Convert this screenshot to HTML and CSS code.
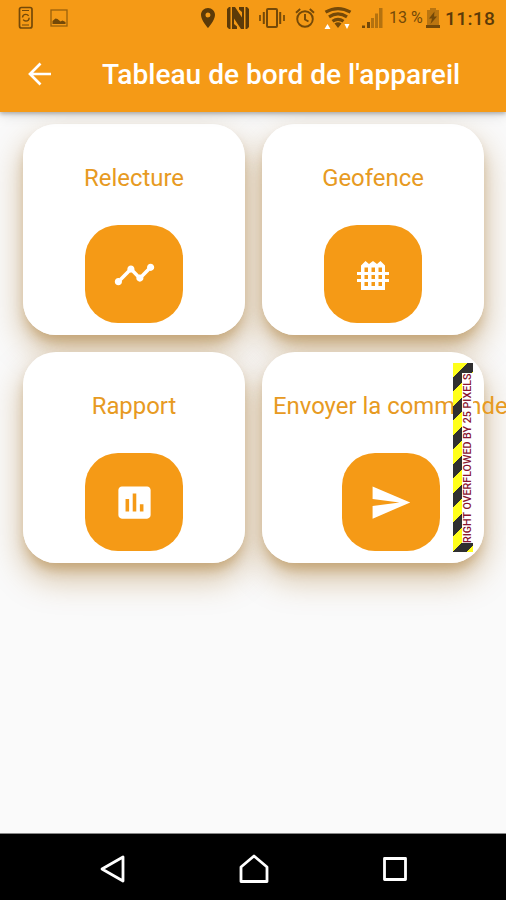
FILE: index.html
```
<!DOCTYPE html>
<html lang="fr">
<head>
<meta charset="utf-8">
<title>Tableau de bord de l'appareil</title>
<link rel="stylesheet" href="styles.css">
</head>
<body>
<div class="screen">
  <header class="header">
    <div class="status">
      <div class="status-left">
        <svg width="16" height="24" viewBox="0 0 16 24" fill="none" stroke="currentColor" stroke-width="1.7"><rect x="1.5" y="1.5" width="12.5" height="20.5" rx="2"/><path d="M4 4.500h7M4 19h7" stroke-width="1.200"/><circle cx="7.800" cy="11.700" r="3.300" stroke-width="1.400" stroke-dasharray="8 2.370"/></svg>
        <svg class="picture" width="18" height="18" viewBox="0 0 18 18"><rect x="1" y="1" width="16" height="16" fill="none" stroke="currentColor" stroke-width="1.300" opacity=".7"/><path d="M2.500 15v-3l3-2.500 2 .5 3 2.500 2-1 3 1.500V15z" fill="currentColor"/></svg>
      </div>
      <div class="status-right">
        <svg class="pin" width="14" height="20" viewBox="5 2 14 20" fill="currentColor"><path d="M12 2C8.130 2 5 5.130 5 9c0 5.250 7 13 7 13s7-7.750 7-13c0-3.870-3.130-7-7-7zm0 9.500a2.500 2.500 0 1 1 0-5 2.500 2.500 0 0 1 0 5z"/></svg>
        <svg class="nfc" width="22" height="22" viewBox="0 0 22 22" fill="currentColor"><path d="M0 2L2 0h1.500v22H2l-2-2zM5 0h3l7 10.500V5l-3-2.500V0h5v22h-3L7 11.500V17l3 2.500V22H5zM18.500 0H20l2 2v18l-2 2h-1.500z"/></svg>
        <svg class="vibrate" width="26" height="20" viewBox="0 0 26 20" fill="none" stroke="currentColor" stroke-width="2"><rect x="8" y="1" width="10" height="18" rx="1"/><path d="M4.800 4v12M21.200 4v12"/><path d="M1 7v6M25 7v6" stroke-width="1.700"/></svg>
        <svg class="alarm" width="20" height="20" viewBox="0 0 20 20" fill="none" stroke="currentColor" stroke-width="1.900"><circle cx="10" cy="11" r="7.800"/><path d="M1 4.800L5.200 1M19 4.800L14.800 1M10 6v5.500l3.500 2"/></svg>
        <svg class="wifi" width="28" height="24" viewBox="0 0 28 24"><g fill="none" stroke="currentColor" stroke-width="3.200"><path d="M1.500 6.200Q14-1 26.500 6.200"/><path d="M5 10.800Q14 5 23 10.800"/><path d="M8.500 15.300Q14 11.500 19.500 15.300"/></g><path d="M10.500 17.600Q14 15 17.500 17.600L14 22z" fill="currentColor"/><path d="M.5 23l3-5 3 5zM20.500 18h5l-2.500 5z" fill="#fff"/></svg>
        <svg class="signal" width="21" height="20" viewBox="0 0 21 20" fill="currentColor"><path d="M0 17.500h3V20H0zM5 14h3v6H5z"/><path d="M9 10h3v10H9zM13 5.500h3V20h-3zM17 0h3.500v20H17z" opacity=".5"/></svg>
        <span class="percent">13 %</span>
        <svg class="battery" width="14" height="20" viewBox="0 0 14 20"><path d="M4 0h6v2h3v15H1V2h3z" fill="currentColor" opacity=".45"/><path d="M0 17h14v3H0zM8.500 3.500L3 10.500h3L4.500 16l6.500-7.500H8z" fill="currentColor"/></svg>
        <span class="clock">11:18</span>
      </div>
    </div>
    <div class="appbar">
      <svg class="back" width="24" height="24" viewBox="0 0 24 24" fill="none" stroke="#fff" stroke-width="2.700"><path d="M23 12H3M12.500 1.500L2 12l10.500 10.500"/></svg>
      <h1>Tableau de bord de l'appareil</h1>
    </div>
  </header>

  <main class="grid">
    <section class="card">
      <h2>Relecture</h2>
      <div class="button"><svg class="icon" viewBox="0 0 24 24"><path d="M23 8c0 1.100-.9 2-2 2-.18 0-.35-.02-.51-.07l-3.560 3.550c.05.16.07.34.07.52 0 1.100-.9 2-2 2s-2-.9-2-2c0-.18.02-.36.07-.52l-2.550-2.550c-.16.05-.34.07-.52.07s-.36-.02-.52-.07l-4.550 4.560c.05.16.07.33.07.51 0 1.100-.9 2-2 2s-2-.9-2-2 .9-2 2-2c.18 0 .35.02.51.07l4.560-4.550C8.020 9.360 8 9.180 8 9c0-1.100.9-2 2-2s2 .9 2 2c0 .18-.02.36-.07.52l2.550 2.550c.16-.05.34-.07.52-.07s.36.02.52.07l3.550-3.560C19.020 8.350 19 8.180 19 8c0-1.100.9-2 2-2s2 .9 2 2z"/></svg></div>
    </section>
    <section class="card">
      <h2>Geofence</h2>
      <div class="button"><svg class="fence" viewBox="0 0 32 29"><path fill-rule="evenodd" d="M4 4.500L8.500 0 12 3l4-3 4 3 3.500-3L28 4.500V11h4v3h-4v4h4v3h-4v8H4v-8H0v-3h4v-4H0v-3h4zM7.500 6.500V11H11V6.500zm7 0V11H18V6.500zm7 0V11H25V6.500zM7.500 14v4H11v-4zm7 0v4H18v-4zm7 0v4H25v-4zM7.500 21v4H11v-4zm7 0v4H18v-4zm7 0v4H25v-4z"/></svg></div>
    </section>
    <section class="card">
      <h2>Rapport</h2>
      <div class="button"><svg class="icon" viewBox="0 0 24 24"><path d="M19 3H5c-1.100 0-2 .9-2 2v14c0 1.100.9 2 2 2h14c1.100 0 2-.9 2-2V5c0-1.100-.9-2-2-2zM9 17H7v-7h2v7zm4 0h-2V7h2v10zm4 0h-2v-4h2v4z"/></svg></div>
    </section>
    <section class="card card-wide">
      <h2>Envoyer la commande</h2>
      <div class="button"><svg class="icon" viewBox="0 0 24 24"><path d="M2.010 21L23 12 2.010 3 2 10l15 2-15 2z"/></svg></div>
      <div class="overflow"><span>RIGHT OVERFLOWED BY 25 PIXELS</span></div>
    </section>
  </main>

  <nav class="nav">
    <svg width="26" height="28" viewBox="0 0 26 28"><path d="M2 14L23 2v24z"/></svg>
    <svg width="30" height="30" viewBox="0 0 30 30"><path d="M2 13L15 2l13 11v14.500H2z"/></svg>
    <svg width="26" height="26" viewBox="0 0 26 26"><path d="M2.500 2.500h21v21h-21z"/></svg>
  </nav>
</div>
</body>
</html>
```
FILE: styles.css
```
* { box-sizing: border-box; }
body { margin: 0; font-family: Roboto, "Liberation Sans", sans-serif; }
h1, h2 { margin: 0; white-space: nowrap; }
svg { display: block; flex: none; }

.screen {
  width: 506px;
  height: 900px;
  display: flex;
  flex-direction: column;
  overflow: hidden;
  background: #fafafa;
}

.header {
  position: relative;
  z-index: 2;
  flex: none;
  height: 112px;
  background: #f59a16;
  box-shadow: 0 2px 4px rgba(0, 0, 0, .25), 0 4px 12px rgba(0, 0, 0, .1);
}
.status {
  height: 36px;
  padding: 0 11px 0 18px;
  display: flex;
  justify-content: space-between;
  align-items: center;
  color: #744908;
}
.status-left, .status-right { display: flex; align-items: center; }
.picture { margin-left: 16px; }
.pin, .nfc, .clock { color: #5c3a08; }
.nfc { margin-left: 12px; }
.vibrate { margin-left: 10px; }
.alarm { margin-left: 10px; }
.wifi { margin-left: 9px; }
.signal { margin-left: 10px; }
.percent { width: 34px; margin-left: 6px; font-size: 16px; line-height: 20px; white-space: nowrap; }
.battery { margin-left: 3px; }
.clock { width: 50px; margin-left: 5px; padding-top: 1px; font-size: 19.200px; line-height: 22px; font-weight: 500; letter-spacing: .3px; }

.appbar { height: 76px; display: flex; align-items: center; padding-left: 28px; }
.appbar h1 {
  margin-left: 50px;
  padding-top: 1px;
  color: #fff;
  font-size: 28.100px;
  line-height: 36px;
  font-weight: 500;
}

.grid {
  flex: 1;
  display: grid;
  grid-template-columns: 222px 222px;
  grid-auto-rows: 211px;
  gap: 17px;
  padding: 12px 0 0 23px;
  isolation: isolate;
}
.card {
  position: relative;
  display: flex;
  flex-direction: column;
  align-items: center;
  padding: 39px 11px 11px;
  border-radius: 33px;
  background: #fff;
}
/* The shadow sits below every card, so neighbours stay pure white. */
.card::before {
  content: "";
  position: absolute;
  inset: 0;
  z-index: -1;
  border-radius: 33px;
  box-shadow: 0 9px 12px -2px rgba(150, 90, 0, .3), 0 15px 32px 2px rgba(150, 90, 0, .34);
}
.card h2 { color: #e79a22; font-size: 23.900px; line-height: 30px; font-weight: 400; }
.button {
  flex: none;
  width: 98px;
  height: 98px;
  margin-top: 32px;
  border-radius: 33px;
  background: #f59a16;
  display: flex;
  align-items: center;
  justify-content: center;
}
.icon { width: 43px; height: 43px; fill: #fff; }
.fence { width: 32px; height: 29px; margin-top: 2px; fill: #fff; }

.card-wide { align-items: flex-start; }
.card-wide .button { margin-left: 68.500px; }
.overflow {
  position: absolute;
  left: 191px;
  top: 11px;
  width: 20px;
  height: 189px;
  display: flex;
  justify-content: flex-end;
  align-items: center;
  background: repeating-linear-gradient(135deg, #ffff1a 0 10.250px, #303030 10.250px 20.500px);
}
.overflow span {
  width: 11px;
  height: 170px;
  background: #fff;
  color: #8a1530;
  font-size: 10.700px;
  line-height: 11px;
  font-weight: 500;
  white-space: nowrap;
  writing-mode: vertical-rl;
  transform: rotate(180deg);
}

.nav {
  flex: none;
  height: 67px;
  border-top: 1px solid #888;
  background: #000;
  display: flex;
  align-items: center;
  justify-content: space-between;
  padding: 3px 98px 0 100px;
}
.nav path { fill: none; stroke: #fff; stroke-width: 2.800; stroke-linejoin: round; }
```
